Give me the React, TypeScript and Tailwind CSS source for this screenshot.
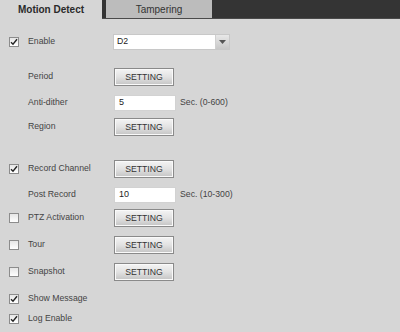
import React from "react";

function Check({ on }: { on: boolean }) {
  return (
    <span className="w-[10px] h-[10px] border border-[#8c8c8c] bg-gradient-to-b from-[#e6e6e6] to-white flex items-center justify-center">
      {on && (
        <svg width="8" height="8" viewBox="0 0 8 8">
          <path d="M1 4.2 L3 6.2 L7 1.2" fill="none" stroke="#222" strokeWidth="1.4" />
        </svg>
      )}
    </span>
  );
}

function SettingButton() {
  return (
    <button className="w-[60px] h-[18px] border border-[#8a8a8a] bg-gradient-to-b from-[#f4f4f4] via-[#e2e2e2] to-[#c4c4c4] text-[8.7px] text-[#333] leading-none shadow-[inset_0_0_0_1px_#fafafa]">
      SETTING
    </button>
  );
}

function NumInput({ value, hint }: { value: string; hint: string }) {
  return (
    <div className="flex items-center">
      <div className="w-[62px] h-[16px] bg-white border border-[#d2d2d2] flex items-center pl-1 text-[9px] text-[#222]">
        {value}
      </div>
      <span className="ml-1 text-[8.7px] text-[#444]">{hint}</span>
    </div>
  );
}

function Row({
  check,
  label,
  mt,
  children,
}: {
  check?: boolean;
  label: string;
  mt: string;
  children?: React.ReactNode;
}) {
  return (
    <div className={`flex items-center h-5 pl-[9px] ${mt}`}>
      <div className="w-[19px] flex">{check !== undefined && <Check on={check} />}</div>
      <div className="w-[86px] text-[8.7px] text-[#444]">{label}</div>
      {children}
    </div>
  );
}

export default function App() {
  return (
    <div
      className="w-[400px] h-[332px] bg-[#d6d6d6] overflow-hidden"
      style={{ fontFamily: '"Liberation Sans", Arial, sans-serif' }}
    >
      <div className="flex h-[19px] bg-[#343434] border-b border-[#4a4a4a]">
        <div className="w-[102px] h-[19px] bg-[#d6d6d6] flex items-center justify-center text-[10px] font-bold text-[#2a2a2a]">
          Motion Detect
        </div>
        <div className="ml-[4px] w-[106px] bg-[#bcbcbc] flex items-center justify-center text-[10px] text-[#333]">
          Tampering
        </div>
      </div>

      <div className="flex flex-col">
        <div className="flex items-center h-5 pl-[9px] mt-[13px]">
          <div className="w-[19px] flex">
            <Check on />
          </div>
          <div className="w-[85px] text-[8.7px] text-[#444]">Enable</div>
          <div className="flex h-[16px] w-[117px] border border-[#c8c8c8] bg-white">
            <div className="flex-1 flex items-center pl-[3px] text-[8.7px] text-[#222]">D2</div>
            <div className="w-[14px] border-l border-[#d0d0d0] bg-gradient-to-b from-[#e8e8e8] to-[#c8c8c8] flex items-center justify-center">
              <svg width="7" height="4" viewBox="0 0 7 4">
                <path d="M0 0 H7 L3.5 4 Z" fill="#555" />
              </svg>
            </div>
          </div>
        </div>

        <Row label="Period" mt="mt-[15px]">
          <SettingButton />
        </Row>
        <Row label="Anti-dither" mt="mt-[6px]">
          <NumInput value="5" hint="Sec. (0-600)" />
        </Row>
        <Row label="Region" mt="mt-[4px]">
          <SettingButton />
        </Row>
        <Row check label="Record Channel" mt="mt-[22px]">
          <SettingButton />
        </Row>
        <Row label="Post Record" mt="mt-[6px]">
          <NumInput value="10" hint="Sec. (10-300)" />
        </Row>
        <Row check={false} label="PTZ Activation" mt="mt-[3px]">
          <SettingButton />
        </Row>
        <Row check={false} label="Tour" mt="mt-[7px]">
          <SettingButton />
        </Row>
        <Row check={false} label="Snapshot" mt="mt-[7px]">
          <SettingButton />
        </Row>
        <Row check label="Show Message" mt="mt-[7px]" />
        <Row check label="Log Enable" mt="mt-0" />
      </div>
    </div>
  );
}
